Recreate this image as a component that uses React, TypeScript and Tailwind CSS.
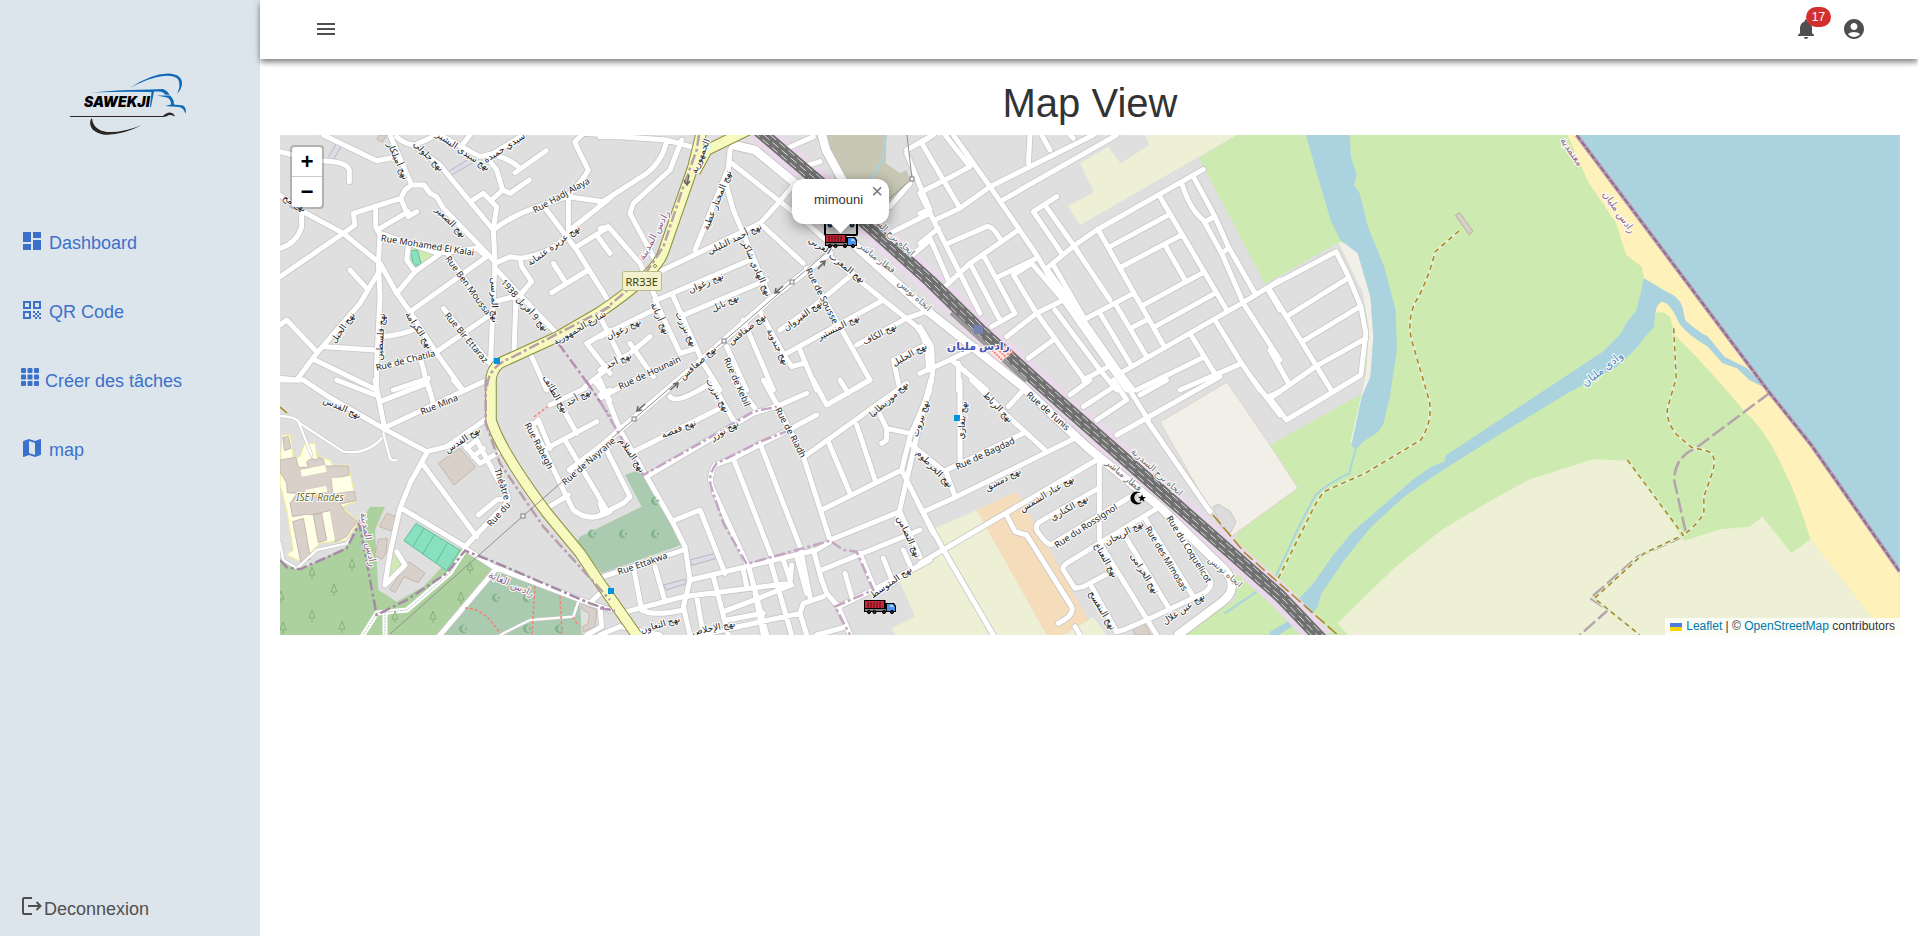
import React from "react";
import {
  MdAccountCircle,
  MdDashboard,
  MdMap,
  MdMenu,
  MdNotifications,
  MdQrCode,
} from "react-icons/md";

/* Map sectors: every sector is digitised on its own grid and placed here. */
const SECTORS = {
  a: "translate(280 130) scale(0.33333)",
  b: "translate(600 130) scale(0.33333)",
  c: "translate(920 130) scale(0.33333)",
  d: "translate(280 380) scale(0.33333)",
  e: "translate(600 380) scale(0.33333)",
  f: "translate(920 380) scale(0.33333)",
  g: "translate(1270 130) scale(0.4132 0.33333)",
} as const;
type SectorId = keyof typeof SECTORS;

const ORIGINS: Record<SectorId, [number, number, number, number]> = {
  a: [280, 130, 3, 3],
  b: [600, 130, 3, 3],
  c: [920, 130, 3, 3],
  d: [280, 380, 3, 3],
  e: [600, 380, 3, 3],
  f: [920, 380, 3, 3],
  g: [1270, 130, 2.42, 3],
};

const ROADS: [SectorId, string][] = [
  ["a", "M0 65L40 75M130 93Q200 95 208 120V155M130 15L290 92L345 82M330 15L395 165L432 165L450 190L470 200L490 235L645 395M395 165L375 180L362 205L220 250L225 285L190 310L0 440M362 205L385 260L410 245M0 195L60 240L190 310L300 400L350 490L390 545L470 670L545 775M65 240V290Q50 340 0 355M287 240V290L300 315L295 400L300 500L290 700V780M300 295L385 245"],
  ["a", "M350 20Q370 40 400 45L480 105L570 215L640 300M405 45L470 15M480 15L600 80L640 70L730 15M550 40L570 15M620 80L650 120L668 180L690 190L748 150M570 215L610 190L650 230L640 300L645 395L632 690M668 180L635 210M640 75Q690 85 720 115M705 128L798 62"],
  ["a", "M640 300Q690 260 760 235L860 200Q910 150 925 120L890 50L885 35L910 10L990 15M865 200L970 215M865 200V295M800 240L890 360L990 520M990 205L870 300Q830 370 720 385L690 380L645 400M890 350L980 295M950 315L990 370M925 420L815 488M820 400L855 455M650 420L720 495L830 610M720 385L725 410L755 455L720 495L645 515M708 500L702 670"],
  ["a", "M390 545L620 380M505 375L630 560M300 310L475 370L590 355L620 380M385 350L380 390L405 425L350 490M405 425L475 375M630 555L470 665L295 715M490 535L630 700M305 620Q370 615 410 595M210 420L260 475M300 420L240 520L110 670L50 750L0 745M135 650L285 660M0 585L20 570L110 665M105 690L290 780M420 680L445 775M340 780L445 745M755 680L800 780M990 600L920 640L990 730M915 770L990 710"],
  ["b", "M0 20L60 20L200 30L290 55M200 30Q190 90 140 130L0 220M245 30L210 120L100 220L90 250L165 390M0 295L25 290L120 400L170 510M390 60L380 170L400 240L505 490M395 100L610 270L700 350M385 115L285 360M165 430L200 415L480 280L530 225L580 165M480 280L610 400M170 510L450 390M160 540L0 620M240 560L500 450M220 500L310 700L360 780M165 510L240 670L290 655"],
  ["b", "M480 545L555 680L575 710L610 700M540 600L640 530L760 430M560 670L850 510M620 415L720 590L810 750L740 790M690 380L850 510L950 590Q985 630 985 720M770 645L920 565L990 540M990 640L880 690L900 780M600 660L650 780M380 650L440 780M430 570L520 780M550 60L640 20M610 110L660 95M920 60L990 20M920 70L990 240M870 230L930 160M990 250L870 310M990 330L920 390M0 560L70 700M0 720L90 670L150 620M90 640L160 740"],
  ["c", "M0 40L40 15M5 40L120 235M75 15L150 110L75 150L5 185M100 15L210 170L350 375L430 510M45 270L120 235L210 170L520 15M245 212L590 15M0 190L60 310L180 550M0 250L25 240M0 340L55 295M330 15L325 100M365 15L390 60M450 15L460 25M85 340L200 290Q215 285 240 325M75 470L150 400L295 300M30 325L85 450M190 375L285 550L215 590M155 410L240 570M235 440L350 385M410 200L340 245L425 370M375 225L460 345L570 510"],
  ["c", "M850 118L530 300L465 345L380 415M400 405L490 560M380 415L490 570L605 735M535 300L730 645M570 350L745 255M605 410L785 315M720 200L920 540M735 345L795 450M670 525L845 430M705 590L885 490M640 590L680 570M785 160Q810 240 850 270L905 370L970 520L1080 690M820 140L885 260L925 350L1005 490M855 275L880 262M905 370L925 355M1080 450L965 520L600 730M1045 480L1080 540M490 570L640 490M585 520L680 680M540 550L630 700"],
  ["c", "M350 550L280 435L335 400L430 510L620 780M350 550L490 745M260 620L350 550L430 510M325 685L400 630M405 540L540 720L590 780M490 750L565 710M885 570L965 700L1020 780M810 610L890 740M650 780L845 685M780 780L965 700M610 740L640 780M0 590L35 650L38 730L0 870M0 730L90 690L170 650M115 700V780M95 690L200 780"],
  ["d", "M0 0H70L145 50L310 145L440 215M285 0L315 150M170 0L285 45M300 65L440 10M440 0L460 70M310 145L610 5M520 0L545 30M440 215L500 200L615 120M440 220L390 310L360 385L330 520L315 615L375 555L350 515M430 255L590 470M365 385L555 500L670 380Q700 350 670 330L590 180M595 405L650 360L680 355M550 190L600 250L660 215M560 205L590 180M580 230L610 205M555 505L640 560L930 670L990 690M650 565L480 765M930 670L980 620"],
  ["d", "M800 385L865 345M755 130L850 330L880 390Q930 430 990 395M760 135L775 120L810 205M800 205L950 125M855 180L980 390M800 0L890 160M810 75L915 25M940 0L990 60M960 45L990 30M960 680L965 740L920 765"],
  ["e", "M0 55L100 0M0 0L60 150L140 290L220 430L255 500L270 600L250 680L270 765M100 215L360 85M210 50Q230 75 330 10M330 0L400 120M400 0L465 85M490 0L540 90L610 230L690 480M540 75L620 40M345 255L400 235L555 155L650 105M140 290L460 100L540 75M345 255Q325 290 335 320L440 550M400 235L515 530M480 190L600 500L630 650"],
  ["e", "M620 225L920 10M640 0L680 75L810 0M720 0L745 40M685 185L750 340M770 135L825 300M665 390L905 270L1000 460M835 95L860 145L930 160M860 150V180L845 190M990 30L930 170L905 270M930 190L990 240M690 480L900 395L960 530M665 570L960 450M690 485L650 510L270 600M640 510L665 600L680 640L715 680L830 625L990 540M780 520L825 630M850 535L880 610M735 580L755 650M910 510L930 555M715 680L750 765"],
  ["e", "M10 590L250 510M100 560L125 690Q160 710 250 690M165 560L195 665M80 695L250 650L570 610L575 555M225 420L300 390L375 580M290 650L310 765M340 590L385 765M370 695L475 655L575 615M380 720L490 700M430 570L440 620M445 555L500 765M510 540L575 765M300 765L600 700L610 670L670 650M550 540L570 600M465 640L490 765M590 530L620 640M600 700L620 765M650 765L740 740M20 210L90 350L70 370L0 405M0 370L10 400M0 765L60 740L180 765"],
  ["f", "M35 0L-10 170L-70 430M120 0V240M155 0L265 110L380 215M310 30L265 80M80 270L310 160M10 395L100 355L465 175M0 215L80 280L105 350M0 550L530 240M538 240V480M640 345L590 375L400 490Q385 505 350 450Q345 435 360 425L535 325M720 380L530 495L440 550Q425 560 430 570L465 625L490 620L575 575M540 490L710 765M610 460L750 690M675 415L820 650M515 620L590 755L610 750L680 720L850 640Q880 620 870 600L740 400"],
  ["f", "M0 380L65 500L220 765M260 405L285 455L320 465L455 680Q465 705 415 730M590 165L900 -10M680 120L870 395M450 45L510 0M490 80L590 15M530 120L620 60L580 0M610 0L685 120M660 45L740 0M1000 0L1080 105M1045 50L1080 35M465 740L480 765"],
  ["g", "M0 470L160 365L190 440L220 530L232 610L220 735L40 870L0 805L110 710L232 625M0 480L150 785M40 560L188 445M78 635L218 530M0 660L45 760"],
];

const WIDE_ROADS =
  "M733 145L755 150L795 183L860 250L930 313L1022 386L1087 447L1160 507L1225 570Q1240 588 1222 602L1178 635M822 135L826 150L845 185L855 215";
const SFAX_ROAD = "M830 253L773 297L690 370L600 447L570 470";
const FINE_ROADS: [SectorId, string][] = [
  ["d", "M0 108Q50 110 60 130L190 215Q260 225 305 175M55 125L95 225M310 160L330 235Q340 245 350 240M0 490L10 540L50 565L110 510L200 490L215 470"],
  ["d", "M660 765L750 720L880 710L895 665"],
];
const PRIMARY =
  "M702 130L693 167L663 253Q655 275 600 312L557 337L500 363Q490 370 491 385V420Q500 450 547 513L580 553L600 583L640 640M748 130L707 150L695 172";
const RAIL = "M758 130L840 200L930 281L980 330L1043 387L1153 484L1280 596L1322 640";

type Shape = [SectorId, string, string];
const AREAS: Shape[] = [
  ["c", "fill-[#eef0d5]", "M675 15L688 45L602 100L565 50L480 100L523 187L443 228L480 285L950 15Z"],
  ["b", "fill-[#c7c7b4]", "M672 15H860L857 100L900 130L920 120L935 165L860 230H720L700 130Z"],
  ["f", "fill-[#eef0d5]", "M45 445L170 390L380 765H-75L-85 745L-15 710L-65 595L70 500Z"],
  ["f", "fill-[#eef0d5]", "M505 720L520 710L560 765H430Z"],
  ["f", "fill-[#f5dcba]", "M170 390L290 335L505 720L430 765H380Z"],
  ["e", "fill-[#aacbaf]", "M75 285L120 268L180 350L243 495L5 580L-70 485L-60 470L125 380Z"],
  ["d", "fill-[#add19e]", "M0 540L60 570L200 500L240 430L270 380H315L285 450L295 630L350 665L430 620L540 505L640 560L480 765H0Z"],
  ["d", "fill-[#aacbaf]", "M640 565L900 665L905 765H480Z"],
  ["d", "fill-[#cdebb0]", "M345 515L370 545L325 605Z"],
  ["d", "fill-[#ffffe5] stroke-[#f3f08c]", "M5 165L30 165L40 235L60 230L75 190L105 190L110 230L150 240L160 260L205 255L228 365L185 380L235 425L200 480L120 490L65 545L20 525L40 510L20 390L0 310Z"],
  ["d", "fill-[#d9d0c9] stroke-[#c5b9af]", "M8 172L25 170L32 205L14 212ZM0 240L48 232L55 262L85 262L80 245L95 235L108 240L115 232L130 238L135 258L205 258L208 285L155 298L158 335L224 335L228 362L180 372L195 395L232 425L212 450L200 470L165 485L150 392L90 405L82 402L38 410L30 370L52 340L22 338L20 310L0 275ZM100 405L125 400L140 480L115 488ZM38 425L70 415L92 538L62 545Z"],
  ["d", "fill-[#ffffe5]", "M62 270L135 255L140 275L65 290ZM75 330L138 318L142 335L80 345ZM155 295L212 290L216 332L160 340ZM75 412L95 406L112 492L90 500ZM132 398L150 394L165 480L148 484Z"],
  ["d", "fill-[#d9d0c9] stroke-[#c5b9af]", "M540 205L587 262L522 315L475 250ZM320 400L345 408L340 455L298 440ZM295 478L322 475L318 520L305 538L285 525ZM388 545L435 580L415 608L372 590L345 638L328 628ZM905 670L950 690L945 740L910 755L908 740L925 730L928 700L905 688Z"],
  ["d", "fill-[#88e0be] stroke-[#5fbf9c]", "M408 430L540 510L500 572L372 482ZM432 445L400 498M462 465L428 523M502 490L468 548"],
  ["a", "fill-[#cdebb0]", "M388 345L470 375L408 425L390 395Z"],
  ["a", "fill-[#88e0be] stroke-[#5fbf9c]", "M390 363L412 360L424 402L402 408Z"],
  ["a", "fill-[#dcdce8] stroke-[#b8b8c4]", "M170 40L187 43L160 90L142 86ZM575 82L590 92L510 138L503 126Z"],
  ["a", "fill-[#d9d0c9] stroke-[#c5b9af]", "M298 15H320L308 36L290 28Z"],
  ["e", "fill-[#dcdce8] stroke-[#b8b8c4]", "M270 540L345 520L350 535L275 556ZM190 615L255 598L260 610L200 630Z"],
  ["f", "fill-[#d9d0c9] stroke-[#c5b9af]", "M635 740L670 725L692 765H645Z"],
];

const COAST: [string, string][] = [
  ["fill-[#f2efe9]", "M165 335L195 345L213 370L243 500L250 620L243 740L205 955L195 935L222 790L232 735L240 600L225 490Z"],
  ["fill-[#fff1ba]", "M720 15H742L1210 790L1310 945L1524 1325V1515H1490L1308 1228Q1280 1110 1242 1015Q1200 900 1145 840Q1080 740 980 615L968 560Q950 540 932 550L935 525L905 445L900 410L862 375L838 280L770 155Z"],
  ["fill-[#eef0d5]", "M163 1480L300 1315L415 1200L530 1115L625 1050L780 988L865 992L1003 1232L1090 1198L1160 1190L1192 1160L1262 1270L1308 1228L1490 1515H190Z"],
  ["fill-[#aad3df]", "M87 15H193L196 80L210 135L203 165L217 190L237 290L275 405L304 540L307 660L290 800L275 880L262 905L225 935L207 960L197 945L222 800L243 740L250 620L243 500L212 370L170 330L148 275L118 150Z"],
  ["fill-[#aad3df]", "M905 445L960 485Q990 500 998 530L1005 570Q1030 600 1060 620L1100 680L1155 715L1200 775L1160 750L1130 715L1095 700L1060 650Q1010 615 990 580Q970 520 950 515Q930 520 930 590Q900 630 890 650L840 710L720 790L560 910L400 1035L325 1100L245 1190L180 1290L125 1390L115 1430L100 1455L60 1420L105 1360L150 1280L200 1205L345 1050L390 1010L422 995L427 975L580 850L805 665L850 610L862 580L887 540L897 490Z"],
  ["fill-[#aad3df]", "M50 1470L0 1505V1515H20L60 1485Z"],
  ["fill-[#aad3df]", "M742 15H1524V1325L1310 945L1210 790Z"],
];
const SHORE = "M742 15L1210 790L1310 945L1524 1325";

const TRACKS =
  "M457 303L400 365Q380 460 350 520Q330 580 345 640L385 810Q395 870 365 930L230 1030L130 1085Q110 1120 95 1160L18 1350M977 595L983 745L963 830Q955 870 985 915L1020 952L1055 962Q1085 970 1070 1030L1050 1100V1150Q1030 1190 1000 1215M865 990L1000 1215L905 1270L785 1405L895 1515";

const BORDERS: Shape[] = [
  ["d", "stroke-[#a58aa5]", "M0 540L20 562L60 568L200 505L238 430L290 705L380 660L500 580L555 512L640 545L930 670L990 690"],
  ["d", "stroke-[#b9a0a8]", "M617 0V130L660 250L790 440L990 660"],
  ["d", "stroke-[#b58fb5]", "M920 5L990 110"],
  ["a", "stroke-[#b58fb5]", "M835 640L930 770"],
  ["a", "stroke-[#b9a0a8]", "M990 530L700 680Q620 710 620 780"],
  ["b", "stroke-[#b9a0a8]", "M297 15L290 60L250 170L190 350L130 440L0 550"],
  ["e", "stroke-[#c4a6c4]", "M0 65L50 150L130 285L300 190L460 95L530 80M570 150L480 185L350 250Q320 290 335 325L370 430L440 552L690 482L730 510L770 515L820 630L705 680L750 765"],
  ["e", "stroke-[#b58fb5]", "M0 685L45 692"],
];
const DELEGATION_BORDER =
  "M1210 788L1030 955Q980 980 978 1050L1005 1200L990 1225L890 1280L775 1405L818 1440L750 1515";

type Label = [SectorId, number, number, number, string];
const LABELS: Label[] = [
  ["a", 443, 345, 9, "Rue Mohamed El Kalai"],
  ["a", 843, 195, -29, "Rue Hadj Alaya"],
  ["a", 565, 465, 54, "Rue Ben Moussa"],
  ["a", 560, 622, 50, "Rue Bir Ettaraz"],
  ["a", 376, 690, -14, "Rue de Chatila"],
  ["a", 355, 92, 66, "نهج أميلكار"],
  ["a", 447, 77, 45, "نهج جلولي"],
  ["a", 550, 62, 34, "نهج سيدي البشير"],
  ["a", 672, 52, -33, "سيدي حميدة"],
  ["a", 513, 275, 45, "نهج الصغير"],
  ["a", 820, 345, -36, "نهج عزيزة عثمانة"],
  ["a", 735, 525, 48, "نهج 9 أفريل 1938"],
  ["a", 645, 510, 88, "نهج المرسى"],
  ["a", 418, 600, 57, "نهج الكرامة"],
  ["a", 300, 620, -86, "نهج فلسطين"],
  ["a", 187, 592, -55, "نهج الجبل"],
  ["a", 44, 218, 30, "نهج مح"],
  ["a", 898, 592, -30, "شارع الجمهورية"],
  ["a", 895, 800, -28, "نهج أحد"],
  ["b", 300, 78, -68, "الجمهورية"],
  ["b", 350, 210, -68, "نهج المختار عطية"],
  ["b", 403, 325, -26, "نهج أحمد التليلي"],
  ["b", 472, 415, 66, "نهج الهادي شاكر"],
  ["b", 317, 457, -24, "نهج زغوان"],
  ["b", 375, 517, -26, "نهج نابل"],
  ["b", 182, 565, 66, "نهج أريانة"],
  ["b", 260, 598, 64, "نهج بنزرت"],
  ["b", 70, 595, -26, "نهج زغوان"],
  ["b", 55, 690, -24, "نهج أحد"],
  ["b", 148, 727, -25, "Rue de Hounain"],
  ["b", 440, 595, -38, "نهج صفاقس"],
  ["b", 293, 697, -42, "نهج صفاقس"],
  ["b", 535, 650, 64, "نهج جندوبة"],
  ["b", 607, 555, -36, "نهج القيروان"],
  ["b", 715, 590, -27, "نهج المنستير"],
  ["b", 838, 610, -27, "نهج الكاف"],
  ["b", 928, 672, -29, "نهج الجليل"],
  ["b", 742, 412, 38, "نهج المغرب"],
  ["b", 660, 345, 32, "العربي"],
  ["b", 667, 497, 63, "Rue de Sousse"],
  ["b", 412, 755, 66, "Rue de Kebil"],
  ["d", 187, 82, 24, "نهج القدس"],
  ["d", 547, 178, -33, "نهج القدس"],
  ["d", 477, 73, -22, "Rue Mina"],
  ["d", 778, 197, 62, "Rue Rabegh"],
  ["d", 925, 243, -41, "Rue de Nayrane"],
  ["d", 655, 402, -48, "Rue du"],
  ["d", 668, 312, 72, "Théâtre"],
  ["d", 828, 42, 60, "نهج الطائف"],
  ["e", 355, 45, 60, "نهج بنزرت"],
  ["e", 235, 145, -22, "نهج قفصة"],
  ["e", 373, 150, -30, "نهج توزر"],
  ["e", 97, 225, 56, "نهج السلام"],
  ["e", 573, 157, 62, "Rue de Riadh"],
  ["e", 865, 57, -42, "نهج موريطانيا"],
  ["e", 960, 115, -72, "نهج بيروت"],
  ["e", 127, 550, -19, "Rue Ettakwa"],
  ["e", 180, 732, -17, "نهج التعاون"],
  ["e", 340, 742, -12, "نهج الإخلاص"],
  ["e", 928, 470, 65, "نهج التضامن"],
  ["e", 872, 605, -35, "نهج المتوسط"],
  ["f", 125, 120, -85, "نهج بنغازي"],
  ["f", 235, 80, 46, "نهج الرباط"],
  ["f", 385, 92, 41, "Rue de Tunis"],
  ["f", 195, 220, -25, "Rue de Bagdad"],
  ["f", 45, 265, 46, "نهج الخرطوم"],
  ["f", 248, 297, -28, "نهج دمشق"],
  ["f", 380, 340, -31, "نهج عباد الشمس"],
  ["f", 447, 382, -30, "نهج الكناري"],
  ["f", 497, 437, -33, "Rue du Rossignol"],
  ["f", 612, 457, -28, "نهج الريحان"],
  ["f", 560, 540, 60, "نهج النعناع"],
  ["f", 675, 580, 58, "نهج الخزامى"],
  ["f", 740, 535, 59, "Rue des Mimosas"],
  ["f", 808, 507, 58, "Rue du Coquelicot"],
  ["f", 790, 685, -34, "نهج عين غلال"],
  ["f", 548, 690, 59, "نهج البنفسج"],
];
const GREY_LABELS: Label[] = [
  ["b", 868, 305, 42, "اتجاه برج السدرية"],
  ["b", 832, 382, 38, "قطار مباشر"],
  ["b", 945, 495, 42, "اتجاه تونس"],
  ["f", 712, 275, 42, "اتجاه برج السدرية"],
  ["f", 612, 285, 40, "قطار مباشر"],
  ["f", 917, 575, 41, "اتجاه تونس"],
];
const PURPLE_LABELS: Label[] = [
  ["b", 160, 315, -62, "رادس المدينة"],
  ["d", 267, 478, 80, "رادس المدينة"],
  ["d", 695, 610, 24, "رادس الغابة"],
  ["g", 732, 64, 56, "معتمدية"],
  ["g", 846, 245, 55, "رادس مليان"],
];

const STOPS = [[497, 361], [611, 591], [957, 418]];
const PYLONS = [[912, 179], [792, 282], [724, 341], [634, 419], [523, 516]];
const TREES = [[352, 565], [312, 573], [334, 590], [312, 616], [342, 627], [395, 617], [433, 617], [470, 568], [461, 598], [283, 628], [281, 597]];
const CRESCENTS = [[496, 598], [527, 598], [463, 629], [527, 629], [559, 629], [592, 534], [623, 534], [655, 534], [655, 501]];

function MapLabels({ items, className }: { items: Label[]; className: string }) {
  return (
    <g className={className} textAnchor="middle" dominantBaseline="central">
      {items.map(([s, x, y, rot, text], i) => {
        const [ox, oy, kx, ky] = ORIGINS[s];
        return (
          <text key={i} transform={`translate(${ox + x / kx} ${oy + y / ky}) rotate(${rot})`}>
            {text}
          </text>
        );
      })}
    </g>
  );
}

function RoadLayer({ roads, className }: { roads: [SectorId, string][]; className: string }) {
  return (
    <g className={className}>
      {roads.map(([s, d], i) => (
        <path key={i} d={d} transform={SECTORS[s]} vectorEffect="non-scaling-stroke" />
      ))}
    </g>
  );
}

function Truck({ x, y }: { x: number; y: number }) {
  return (
    <g transform={`translate(${x} ${y})`}>
      <path className="fill-black" d="M0 0H21.5V3H30L32 6V12H0Z" />
      <path className="fill-[#c62839]" d="M1 1H20V8H1Z" />
      <path className="fill-none stroke-[#5a0e18]" d="M4 2V8M7 2V8M10 2V8M13 2V8M16 2V8" />
      <path className="fill-[#4a95ee]" d="M23 4H29L31 7V11H23Z" />
      <path className="fill-[#a9d2ff]" d="M26 5H29L30 7H26Z" />
      <path className="fill-[#7c7c7c]" d="M1 9H22V11H1Z" />
      <g className="fill-[#222222] stroke-black">
        <circle cx="5" cy="12" r="1.6" />
        <circle cx="10.5" cy="12" r="1.6" />
        <circle cx="20" cy="12" r="1.6" />
        <circle cx="28" cy="12" r="1.6" />
      </g>
    </g>
  );
}

function CityMap() {
  return (
    <svg
      className="block h-full w-full bg-[#dfdfdf] font-['Noto_Sans','DejaVu_Sans',sans-serif]"
      viewBox="280 135 1620 500"
      preserveAspectRatio="xMidYMid slice"
      role="img"
      aria-label="Map"
    >
      <path
        className="fill-[#cdebb0]"
        d="M1199 158L1237 135H1900V635H1180L1235 600V540L1270 445L1363 393L1369 330L1363 293L1338 243L1265 284Z"
      />
      <path className="fill-[#f2efe9] stroke-[#dcd6c8]" d="M1160 422L1227 382L1270 445L1298 488L1232 536L1207 505Z" />
      <path className="fill-[#dcdcdc] stroke-[#c8c8c8]" d="M1213 507L1218 504L1230 511L1236 522L1230 533L1222 528Z" />
      {AREAS.map(([s, c, d], i) => (
        <path key={i} className={c} d={d} transform={SECTORS[s]} vectorEffect="non-scaling-stroke" />
      ))}
      <g transform={SECTORS.g}>
        {COAST.map(([c, d], i) => (
          <path key={i} className={c} d={d} />
        ))}
        <path className="fill-none stroke-[#aad3df] stroke-2" vectorEffect="non-scaling-stroke" d="M207 960L192 1030Q140 1060 110 1095L70 1190L10 1350L-110 1450" />
        <path className="fill-[#d9d0c9] stroke-[#b8aaa0]" vectorEffect="non-scaling-stroke" d="M449 256L459 248L491 304L482 314Z" />
      </g>
      <path className="fill-none stroke-[#aad3df] stroke-2" d="M886 135L883 158L868 186" />

      <path className="fill-none stroke-[#ead9ea]" strokeWidth="24" d={RAIL} />

      <g className="fill-none" strokeLinecap="round" strokeLinejoin="round">
        <RoadLayer roads={FINE_ROADS} className="stroke-[#c4c4c4] stroke-[3.5]" />
        <RoadLayer roads={ROADS} className="stroke-[#c6c6c6] stroke-[6.6]" />
        <path className="stroke-[#c6c6c6]" strokeWidth="7.5" d={SFAX_ROAD} />
        <path className="stroke-[#bdbdbd]" strokeWidth="10" d={WIDE_ROADS} />
        <RoadLayer roads={FINE_ROADS} className="stroke-white stroke-[2.4]" />
        <RoadLayer roads={ROADS} className="stroke-white stroke-[5]" />
        <path className="stroke-white" strokeWidth="6" d={SFAX_ROAD} />
        <path className="stroke-white" strokeWidth="8.5" d={WIDE_ROADS} />
        <path className="stroke-white" strokeWidth="5" d="M465 550L450 573L407 610L377 613L363 635M385 612V635" />
        <path className="stroke-[#b9b9b9]" strokeDasharray="1 2" d="M465 550L450 573L407 610L377 613L363 635M385 612V635" />
      </g>

      <g className="fill-none" strokeLinejoin="round">
        <path className="stroke-[#8b8f3c]" strokeWidth="11.5" d={PRIMARY} />
        <path className="stroke-[#f7fabf]" strokeWidth="9.5" d={PRIMARY} />
        <path className="stroke-[#707070]" strokeWidth="13" d={RAIL} />
        <g className="stroke-[#e6e6e6] stroke-[0.9]" strokeDasharray="8 4">
          <path transform="translate(3 -3)" d={RAIL} />
          <path strokeDashoffset="5" d={RAIL} />
          <path strokeDashoffset="2" transform="translate(-3 3)" d={RAIL} />
        </g>
        <path className="stroke-[#9a9a9a]" strokeWidth="4" d="M951 313L1026 381" />
        <path className="stroke-[#ffe9e6]" strokeWidth="9" d="M1009 348L1003 355M1004 359L993 349" />
        <path className="stroke-[#fa8072] stroke-2" strokeDasharray="2 1" d="M1005 346L1013 353M1003 349L1010 356M992 350L1002 360M995 347L1006 357" />
      </g>

      <g className="fill-none stroke-[2.5]" strokeDasharray="11 3 3 3">
        {BORDERS.map(([s, c, d], i) => (
          <path key={i} className={c} d={d} transform={SECTORS[s]} vectorEffect="non-scaling-stroke" />
        ))}
      </g>
      <g className="fill-none" transform={SECTORS.g}>
        <path className="stroke-[#b5a3ad] stroke-[2.5]" strokeDasharray="15 4" vectorEffect="non-scaling-stroke" d={DELEGATION_BORDER} />
        <path className="stroke-[#dff2cf] stroke-[3]" vectorEffect="non-scaling-stroke" d={TRACKS} />
        <path className="stroke-[#ac8327] stroke-[1.5]" strokeDasharray="5 4" vectorEffect="non-scaling-stroke" d={TRACKS} />
        <path className="stroke-[#b39bb0] stroke-[4]" vectorEffect="non-scaling-stroke" d={SHORE} />
        <path className="stroke-[#8d618b] stroke-[1.5]" strokeDasharray="6 2" vectorEffect="non-scaling-stroke" d={SHORE} />
      </g>
      <g className="fill-none stroke-[#ac8327] stroke-[1.5]">
        <path strokeDasharray="12 4" d="M1213 515L1245 553L1280 584L1340 637" />
        <path d="M280 407L287 413" />
      </g>
      <g className="fill-none stroke-[#fa8072] stroke-[1.5]" strokeDasharray="3 2">
        <path d="M465 608Q485 608 500 634M535 586L532 634M560 596L562 634M534 417L547 407M573 617L578 626" />
      </g>
      <path className="fill-none stroke-[#909090]" d="M390 634L523 516L634 419L724 341L792 282L912 179L907 135" />
      <g className="fill-none stroke-[#666666] stroke-[1.5]">
        <path d="M818 269L825 261M820 262L825 261L824 266M783 286L775 293M776 288L775 293L780 292" />
        <path d="M670 390L678 383M673 384L678 383L677 388M645 404L637 411M638 406L637 411L642 410" />
        <path d="M689 175L687 184M684 180L687 185L690 181" />
      </g>
      <g className="fill-[#f4f4f4] stroke-[#808080]">
        {PYLONS.map(([x, y]) => (
          <rect key={`${x}-${y}`} x={x - 2} y={y - 2} width="4" height="4" />
        ))}
      </g>
      <g className="fill-none stroke-[#86b07c]">
        {TREES.map(([x, y]) => (
          <path key={`${x}-${y}`} d={`M${x} ${y - 6}L${x - 3} ${y + 2}H${x + 3}ZM${x} ${y + 2}V${y + 6}`} />
        ))}
      </g>
      <g className="fill-[#83b48c]">
        {CRESCENTS.map(([x, y]) => (
          <path key={`${x}-${y}`} d={`M${x + 2} ${y - 4}A4.2 4.2 0 1 0 ${x + 3} ${y + 3}A3.5 3.5 0 1 1 ${x + 2} ${y - 4}ZM${x + 2} ${y - 2}L${x + 5} ${y}L${x + 2} ${y + 1}Z`} />
        ))}
      </g>
      <path className="fill-black" d="M1141 493A6.5 6.5 0 1 0 1142 502A5 5 0 1 1 1141 493ZM1142 494L1143 497H1146L1143.5 499L1144.5 502L1142 500L1139.5 501.5L1140.5 498.5L1138 497L1141 496.8Z" />
      <g className="fill-[#0092da]">
        {STOPS.map(([x, y]) => (
          <rect key={`${x}-${y}`} x={x - 3} y={y - 3} width="6" height="6" />
        ))}
      </g>
      <rect className="fill-[#7981b0]" x="974" y="325" width="9" height="9" />
      <circle className="fill-white stroke-[#8b8f3c]" cx="655" cy="266" r="1.5" />

      <g strokeLinejoin="round" className="[paint-order:stroke]">
        <MapLabels items={LABELS} className="fill-[#222222] stroke-white stroke-2 text-[9px]" />
        <MapLabels items={GREY_LABELS} className="fill-[#666666] stroke-white stroke-2 text-[9px]" />
        <MapLabels items={PURPLE_LABELS} className="fill-[#8d618b] stroke-white stroke-2 text-[10px]" />
        <MapLabels items={[["g", 803, 715, -38, "وادي مليان"]]} className="fill-[#4d80b3] stroke-white stroke-2 text-[11px]" />
        <MapLabels items={[["c", 175, 645, 0, "رادس مليان"]]} className="fill-[#4a56b0] stroke-white stroke-2 text-[11px] font-bold" />
        <MapLabels items={[["d", 120, 352, 0, "ISET Radès"]]} className="fill-[#6c6c20] stroke-white stroke-2 text-[10px] italic" />
      </g>
      <rect className="fill-[#f1f1cd] stroke-[#b9bb8a]" x="622.5" y="271.5" width="39" height="19" rx="2" />
      <MapLabels items={[["b", 125, 454, 0, "RR33E"]]} className="fill-[#3f4208] text-[11px]" />

      <rect className="fill-[#d8d8d8] stroke-black stroke-2" x="825" y="223" width="32" height="12" rx="1" />
      <g className="fill-[#28588f] stroke-black">
        <circle cx="830" cy="225" r="2" />
        <circle cx="852" cy="225" r="2" />
      </g>
      <Truck x={825} y={234} />
      <Truck x={864} y={600} />
    </svg>
  );
}

function Logo() {
  return (
    <svg className="block h-[66px] w-[120px]" viewBox="68 71 120 66" role="img" aria-label="Sawekji">
      <g className="fill-[#0e69b6]">
        <path d="M130 88Q150 74 168 73.500Q183 74 182 85Q181 90 177 94Q181 86 178.500 80Q175 75 163 76Q148 78 130 88Z" />
        <path d="M91 92.500Q120 89.500 150 89.500L163 89Q168 91 169.500 95L165 94.500Q163 91.500 159 91.500L154 91.500L151 107H150L151.500 92Q120 91.500 91 92.500Z" />
        <path d="M157 95.500H170Q174 99 174 104.500L183 105.500Q187 108 185.500 114Q184 108 179 107L165 106L171 104.500Q171 99 167 97.500Z" />
      </g>
      <g className="fill-[#2b2523]">
        <path d="M70 116H163Q166 112.500 170 112.500Q174 113 175 116.500Q172 114.500 169 115Q166 117 163 117H70Z" />
        <path d="M92 118Q93 130 107 132Q122 133 142 125Q121 136 103 134.500Q88 131 90.500 120Z" />
      </g>
      <text x="84" y="107" className="fill-black font-['Inter','Liberation_Sans',sans-serif] text-[14px] font-black italic">
        SAWEKJI
      </text>
    </svg>
  );
}

function TasksIcon() {
  return (
    <svg className="mb-1 block size-[18px]" viewBox="0 0 18 18" fill="currentColor" aria-hidden="true">
      {[0, 6.5, 13].map((y) =>
        [0, 6.5, 13].map((x) => <rect key={`${x}-${y}`} x={x} y={y} width="5" height="5" rx="1" />)
      )}
    </svg>
  );
}

function LogoutIcon() {
  return (
    <svg className="mb-1 block h-[18px] w-5" viewBox="0 0 20 18" fill="none" stroke="currentColor" strokeWidth="2" aria-hidden="true">
      <path d="M10 1H2Q1 1 1 2V16Q1 17 2 17H10M6 9H18M14.500 5L18.500 9L14.500 13" />
    </svg>
  );
}

const NAV = [
  { label: "Dashboard", icon: <MdDashboard size={24} />, layout: "pl-5 gap-[5px]" },
  { label: "QR Code", icon: <MdQrCode size={24} />, layout: "pl-5 gap-[5px]" },
  { label: "Créer des tâches", icon: <TasksIcon />, layout: "pl-[21px] gap-1.5" },
  { label: "map", icon: <MdMap size={24} />, layout: "pl-5 gap-[5px]" },
];

export default function App() {
  return (
    <div className="flex min-h-screen bg-white font-['Liberation_Sans',Arial,sans-serif] text-[#333333]">
      <aside className="flex w-[260px] shrink-0 flex-col bg-[#dde5ec]">
        <div className="flex h-[206px] justify-center pt-[71px] pr-1">
          <Logo />
        </div>
        <nav aria-label="Main">
          <ul>
            {NAV.map((item) => (
              <li key={item.label}>
                <a href="#" className={`flex h-[69px] items-center text-lg text-[#3b71ca] ${item.layout}`}>
                  {item.icon}
                  <span className="pt-1">{item.label}</span>
                </a>
              </li>
            ))}
          </ul>
        </nav>
        <a href="#" className="mt-auto mb-[13px] flex items-center gap-0.5 pl-[22px] text-lg text-[#4f4f4f]">
          <LogoutIcon />
          <span className="pt-0.5">Deconnexion</span>
        </a>
      </aside>

      <div className="flex min-w-0 flex-1 flex-col">
        <header className="flex h-[59px] items-center justify-between bg-white pr-[52px] pb-0.5 pl-[54px] text-[#4f4f4f] shadow-[0_3px_6px_-1px_rgba(0,0,0,0.4),0_4px_5px_0_rgba(0,0,0,0.14),0_1px_10px_0_rgba(0,0,0,0.12)]">
          <button type="button" aria-label="Menu">
            <MdMenu size={24} />
          </button>
          <div className="flex gap-6">
            <button type="button" aria-label="Notifications" className="relative">
              <MdNotifications size={24} />
              <span className="absolute -top-2.5 left-3 flex h-5 w-[25px] items-center justify-center rounded-full bg-[#d32f2f] text-xs text-white">
                17
              </span>
            </button>
            <button type="button" aria-label="Account">
              <MdAccountCircle size={24} />
            </button>
          </div>
        </header>

        <main className="pt-5 pr-[18px] pl-5">
          <h1 className="mb-2 text-center text-[40px] leading-[48px]">Map View</h1>
          <section className="relative h-[500px] overflow-hidden" aria-label="Map View">
            <CityMap />

            <div className="absolute top-2.5 left-2.5 flex w-[34px] flex-col rounded border-2 border-black/20 bg-clip-padding text-black">
              <button type="button" aria-label="Zoom in" className="flex h-[30px] items-center justify-center rounded-t-sm border-b border-[#cccccc] bg-white pt-1 font-['Liberation_Mono',monospace] text-[22px] leading-none font-bold">
                +
              </button>
              <button type="button" aria-label="Zoom out" className="flex h-[30px] items-center justify-center rounded-b-sm bg-white pt-1 font-['Liberation_Mono',monospace] text-[22px] leading-none font-bold">
                −
              </button>
            </div>

            <div className="absolute top-11 left-[calc(50%-298px)] h-[45px] w-[97px]">
              <div className="absolute top-[34px] left-[40px] size-[17px] rotate-45 bg-white shadow-[0_3px_14px_rgba(0,0,0,0.4)]" />
              <div className="relative flex h-full items-center justify-center rounded-xl bg-white pr-1 pb-1 text-[13px] shadow-[0_3px_14px_rgba(0,0,0,0.4)]">
                <span>mimouni</span>
                <button type="button" aria-label="Close popup" className="absolute top-0 right-0 size-6 text-xl leading-6 text-[#757575]">
                  ×
                </button>
              </div>
              <div className="absolute top-[34px] left-[40px] size-[17px] rotate-45 bg-white [clip-path:polygon(100%_0,100%_100%,0_100%)]" />
            </div>

            <p className="absolute right-0 bottom-0 flex items-center bg-white/80 px-[5px] text-xs leading-[17px] whitespace-pre text-[#333333]">
              <svg className="mr-1 h-2 w-3" viewBox="0 0 12 8" aria-hidden="true">
                <path fill="#4c7be1" d="M0 0h12v4H0z" />
                <path fill="#ffd500" d="M0 4h12v4H0z" />
              </svg>
              <a href="https://leafletjs.com" className="text-[#0078a8]">Leaflet</a>
              {" | © "}
              <a href="https://www.openstreetmap.org/copyright" className="text-[#0078a8]">OpenStreetMap</a>
              {" contributors"}
            </p>
          </section>
        </main>
      </div>
    </div>
  );
}
